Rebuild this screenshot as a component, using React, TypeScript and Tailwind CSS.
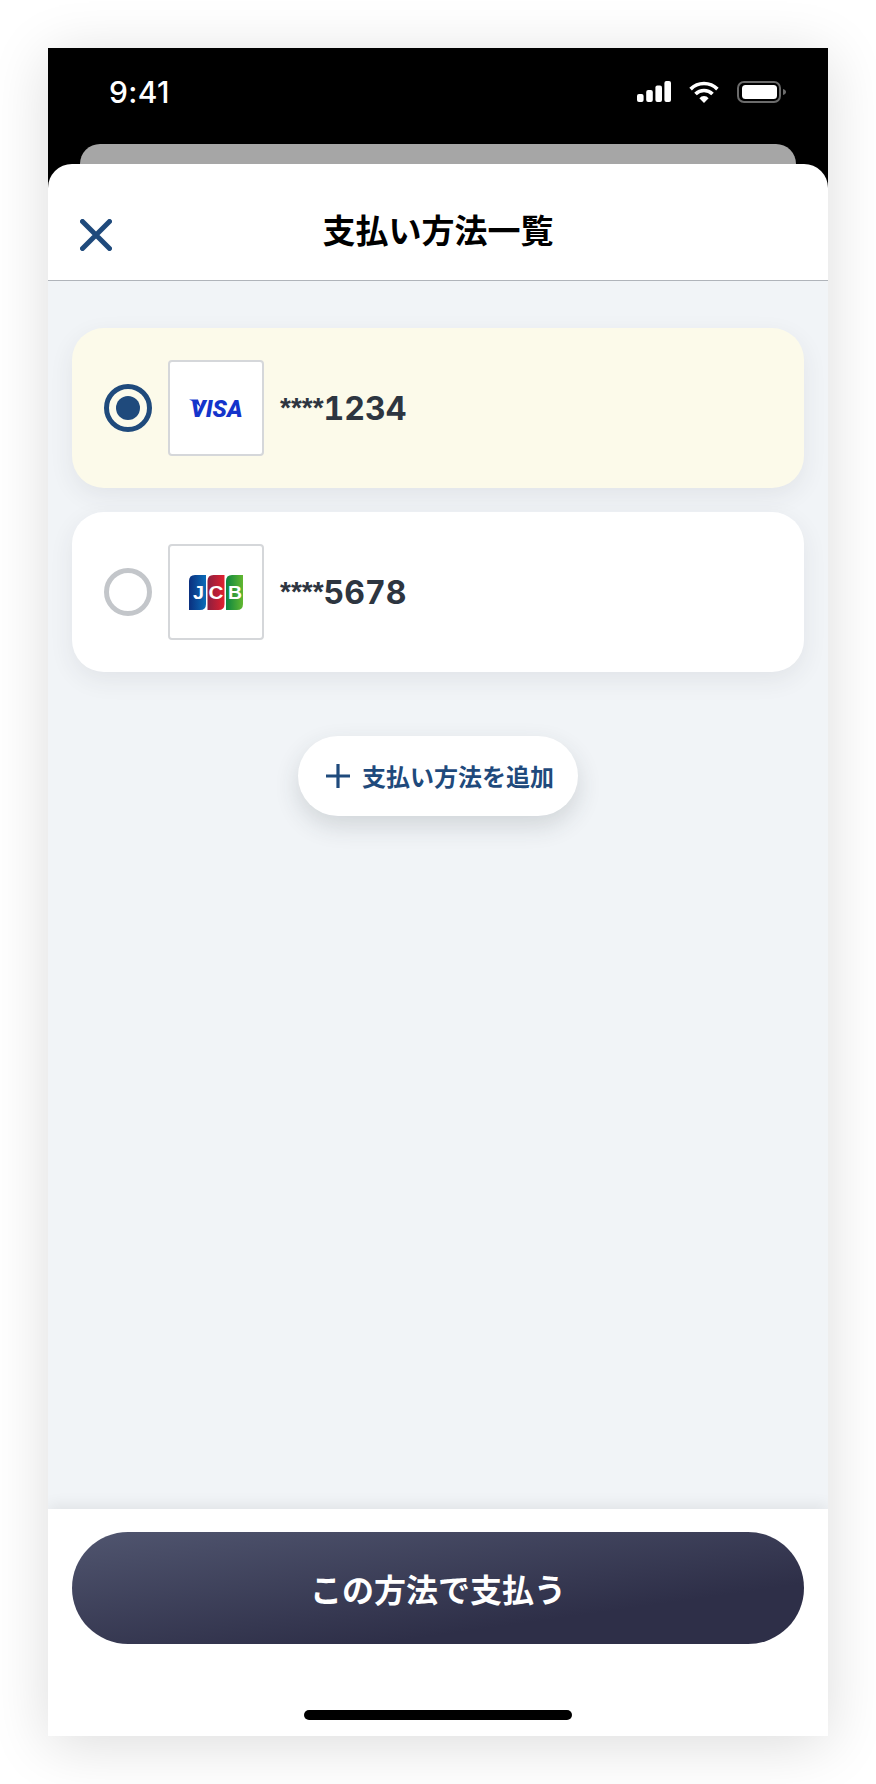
function StatusBar() {
  return (
    <div className="h-[96px] pl-[61px] pr-[42px] flex items-start justify-between text-white">
      <span className="mt-[26px] text-[30px] leading-[36px] font-medium tracking-[0.4px] font-['Inter',sans-serif]">9:41</span>
      <div className="mt-[33px] flex items-start">
        <svg width="34" height="21" viewBox="0 0 34 21" fill="white">
          <rect x="0" y="13" width="6.6" height="8" rx="2" />
          <rect x="9.2" y="9" width="6.6" height="12" rx="2" />
          <rect x="18.4" y="4.500" width="6.6" height="16.500" rx="2" />
          <rect x="27.400" y="0" width="6.6" height="21" rx="2" />
        </svg>
        <svg className="ml-[18px]" width="30" height="22" viewBox="0 0 30 22" fill="none" stroke="white" strokeWidth="3.6">
          <path d="M1.600 8.100A19 19 0 0 1 28.400 8.100" />
          <path d="M6.500 13A12 12 0 0 1 23.500 13" />
          <path d="M10.400 17.200A6 6 0 0 1 19.600 17.200L15 22Z" fill="white" stroke="none" />
        </svg>
        <svg className="ml-[18px]" width="49" height="22" viewBox="0 0 49 22" fill="none">
          <rect x="1" y="1" width="42" height="20" rx="6" stroke="#6b6b6b" strokeWidth="2" />
          <rect x="5" y="4" width="35" height="14" rx="3.500" fill="white" />
          <path d="M46 8C48 8.500 49 9.700 49 11C49 12.300 48 13.500 46 14Z" fill="#6b6b6b" />
        </svg>
      </div>
    </div>
  )
}

function VisaLogo() {
  return (
    <svg width="60" height="30" viewBox="0 0 60 30">
      <path d="M3 6.500H12L15 15Q11 9.500 3 6.500Z" fill="#1434cb" />
      <text
        x="4.500"
        y="24"
        textLength="52"
        lengthAdjust="spacingAndGlyphs"
        fill="#1434cb"
        fontSize="24"
        fontWeight="900"
        fontStyle="italic"
        fontFamily="'Roboto', sans-serif"
      >
        VISA
      </text>
    </svg>
  )
}

function JcbLogo() {
  return (
    <svg width="54" height="35" viewBox="0 0 54 35">
      <defs>
        <linearGradient id="jcb-blue" x1="0" y1="0" x2="1" y2="0">
          <stop offset="0" stopColor="#0b2f7e" />
          <stop offset="1" stopColor="#0a6cb8" />
        </linearGradient>
        <linearGradient id="jcb-red" x1="0" y1="0" x2="1" y2="0">
          <stop offset="0" stopColor="#8c1f3f" />
          <stop offset="1" stopColor="#e0202f" />
        </linearGradient>
        <linearGradient id="jcb-green" x1="0" y1="0" x2="1" y2="0">
          <stop offset="0" stopColor="#0b8540" />
          <stop offset="1" stopColor="#62b730" />
        </linearGradient>
      </defs>
      <path d="M0 6Q0 0 6 0H17V29Q17 35 11 35H0Z" fill="url(#jcb-blue)" />
      <path d="M18.500 6Q18.500 0 24.500 0H35.500V29Q35.500 35 29.500 35H18.500Z" fill="url(#jcb-red)" />
      <path d="M37 6Q37 0 43 0H54V29Q54 35 48 35H37Z" fill="url(#jcb-green)" />
      <g fill="white" fontSize="18" fontWeight="700" fontFamily="'Liberation Sans', sans-serif">
        <text x="4" y="24" textLength="11" lengthAdjust="spacingAndGlyphs">J</text>
        <text x="19.500" y="24" textLength="15" lengthAdjust="spacingAndGlyphs">C</text>
        <text x="39" y="24" textLength="14" lengthAdjust="spacingAndGlyphs">B</text>
      </g>
    </svg>
  )
}

function CardRow({ selected, last4, logo }: { selected: boolean; last4: string; logo: React.ReactNode }) {
  return (
    <div
      className={`h-[160px] rounded-[32px] pl-8 flex items-center shadow-[0_8px_24px_rgba(45,53,64,0.08)] ${
        selected ? 'bg-[#fcfaea]' : 'bg-white'
      }`}
    >
      <div
        className={`w-12 h-12 rounded-full border-[5px] flex items-center justify-center ${
          selected ? 'border-[#1f4a7c]' : 'border-[#c3c6ca] bg-white'
        }`}
      >
        {selected && <div className="w-6 h-6 rounded-full bg-[#1f4a7c]" />}
      </div>
      <div className="ml-4 w-24 h-24 bg-white border-2 border-[#d5d7da] rounded-[4px] flex items-center justify-center">
        {logo}
      </div>
      <div className="ml-4 mt-[2px] text-[#2d3540] font-bold leading-none">
        <span className="text-[28px] align-[3px] font-['Liberation_Sans',sans-serif]">****</span>
        <span className="text-[32px] tabular-nums font-['Inter',sans-serif]">{last4}</span>
      </div>
    </div>
  )
}

export default function App() {
  return (
    <div className="w-[876px] h-[1784px] bg-white pt-12 pl-12 font-['Noto_Sans_CJK_JP',sans-serif]">
      <div className="w-[780px] h-[1688px] bg-black flex flex-col shadow-[0_8px_56px_rgba(0,0,0,0.14)]">
        <StatusBar />
        <div className="mx-8 h-5 bg-[#a6a6a6] rounded-t-[20px]" />
        <div className="flex-1 bg-white rounded-t-[24px] flex flex-col overflow-hidden">
          <div className="h-[117px] shrink-0 relative flex items-center justify-center border-b border-[#b0b4ba]">
            <svg className="absolute left-8 top-[55px]" width="32" height="32" viewBox="0 0 32 32" fill="none" stroke="#1f4a7c" strokeWidth="5" strokeLinecap="round">
              <path d="M2.500 2.500L29.500 29.500M29.500 2.500L2.500 29.500" />
            </svg>
            <h1 className="text-[33px] leading-none font-bold text-black mt-[14px]">支払い方法一覧</h1>
          </div>
          <div className="flex-1 bg-[#f1f4f7] px-6 pt-[47px] flex flex-col">
            <div className="flex flex-col gap-6">
              <CardRow selected last4="1234" logo={<VisaLogo />} />
              <CardRow selected={false} last4="5678" logo={<JcbLogo />} />
            </div>
            <div className="mt-16 flex justify-center">
              <button className="w-[280px] h-20 rounded-full bg-white pl-7 flex items-center gap-3 shadow-[0_10px_24px_rgba(45,53,64,0.16)]">
                <svg width="24" height="24" viewBox="0 0 24 24" fill="none" stroke="#1f4a7c" strokeWidth="3.200">
                  <path d="M12 0V24M0 12H24" />
                </svg>
                <span className="text-[24px] leading-none font-bold text-[#1f4a7c]">支払い方法を追加</span>
              </button>
            </div>
          </div>
          <div className="h-[227px] shrink-0 bg-white px-6 pt-[23px] flex flex-col items-center shadow-[0_-4px_14px_rgba(0,0,0,0.07)] relative">
            <button className="w-full h-[112px] rounded-full bg-[linear-gradient(172deg,#50556f_0%,#2e2f48_72%)] text-white text-[32px] leading-none font-bold">
              この方法で支払う
            </button>
            <div className="mt-[66px] w-[268px] h-[10px] rounded-full bg-black" />
          </div>
        </div>
      </div>
    </div>
  )
}
